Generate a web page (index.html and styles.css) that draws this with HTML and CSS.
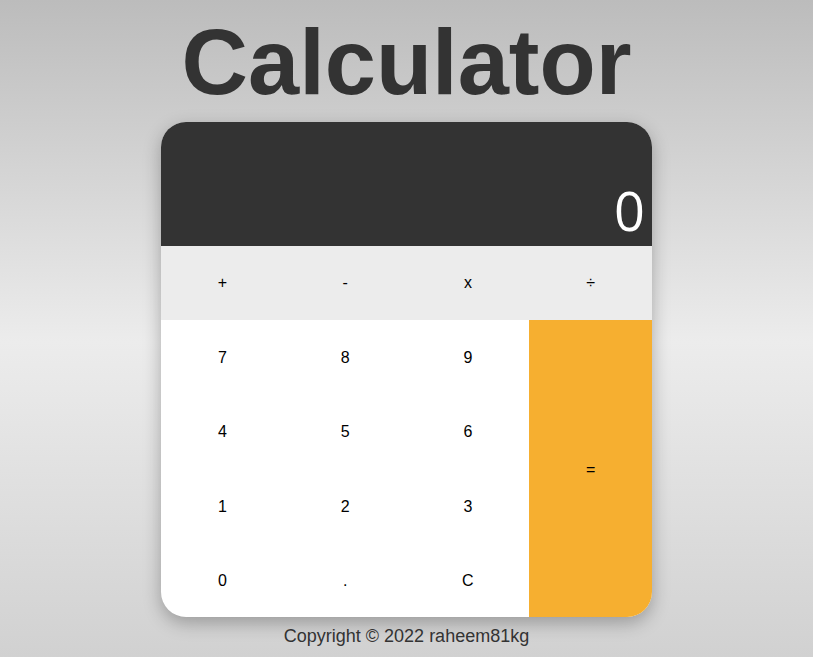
FILE: index.html
```html
<!DOCTYPE html>
<html>
<head>
<meta charset="utf-8">
<link rel="stylesheet" href="styles.css">
</head>
<body>
<h1 class="title">Calculator</h1>
<div class="calc">
  <div class="display">0</div>
  <div class="ops">
    <button class="key">+</button>
    <button class="key">-</button>
    <button class="key">x</button>
    <button class="key">÷</button>
  </div>
  <div class="pad">
    <button class="key">7</button>
    <button class="key">8</button>
    <button class="key">9</button>
    <button class="key equal">=</button>
    <button class="key">4</button>
    <button class="key">5</button>
    <button class="key">6</button>
    <button class="key">1</button>
    <button class="key">2</button>
    <button class="key">3</button>
    <button class="key">0</button>
    <button class="key">.</button>
    <button class="key">C</button>
  </div>
</div>
<p class="copy">Copyright © 2022 raheem81kg</p>
</body>
</html>
```
FILE: styles.css
```css
html, body { margin: 0; height: 100%; }
body {
  background: linear-gradient(#bcbcbc 0%, #ececec 52%, #d1d1d1 100%);
  font-family: "Liberation Sans", Arial, sans-serif;
  display: flex;
  flex-direction: column;
  align-items: center;
}
.title {
  margin: 16px 0 14px;
  font-size: 92px;
  line-height: 92px;
  font-weight: bold;
  color: #333333;
}
.calc {
  width: 491px;
  border-radius: 25px;
  overflow: hidden;
  background: #ffffff;
  box-shadow: 0 6px 18px rgba(0,0,0,0.28);
}
.display {
  height: 124px;
  background: #333333;
  color: #ffffff;
  font-family: "Open Sans", sans-serif;
  font-size: 54px;
  display: flex;
  align-items: flex-end;
  justify-content: flex-end;
  padding: 0 7px 9px 0;
  box-sizing: border-box;
  line-height: 1;
}
.ops {
  display: grid;
  grid-template-columns: repeat(4, 1fr);
  height: 74px;
  background: #ececec;
}
.pad {
  display: grid;
  grid-template-columns: repeat(4, 1fr);
  grid-template-rows: repeat(4, 74.25px);
}
.key {
  border: none;
  background: transparent;
  font-family: "Liberation Sans", Arial, sans-serif;
  font-size: 16px;
  color: #000000;
  padding: 0 0 0 0;
  margin: 0;
}
.pad .key { padding-top: 2px; }
.equal {
  grid-column: 4;
  grid-row: 1 / span 4;
  background: #f6af30;
}
.copy {
  margin: 9px 0 0;
  font-size: 18px;
  color: #333333;
}
```
